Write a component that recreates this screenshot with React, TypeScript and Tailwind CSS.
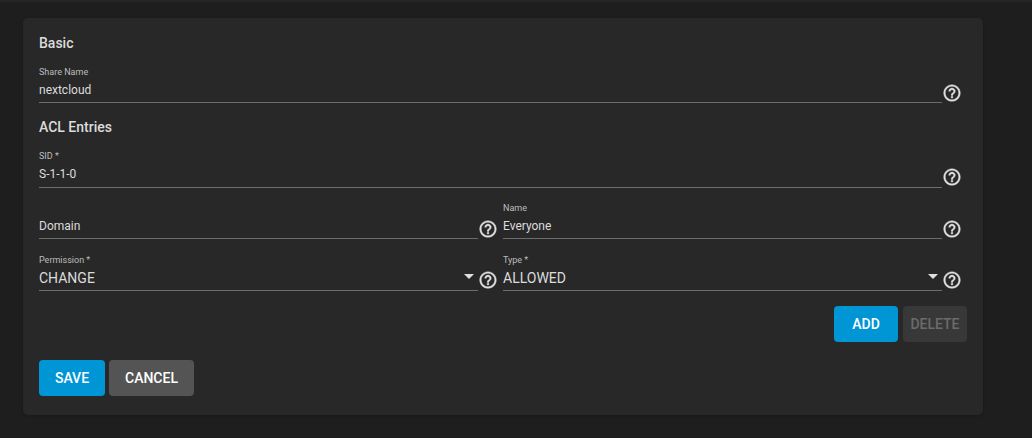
function Help({ raised }: { raised?: boolean }) {
  return (
    <svg width="20" height="20" viewBox="0 0 24 24" className={raised ? "mb-[1px] shrink-0" : "shrink-0"} fill="#e0e0e0" stroke="#e0e0e0" strokeWidth="0.4">
      <path d="M11 18h2v-2h-2v2zm1-16C6.48 2 2 6.48 2 12s4.48 10 10 10 10-4.48 10-10S17.52 2 12 2zm0 18c-4.41 0-8-3.59-8-8s3.59-8 8-8 8 3.59 8 8-3.59 8-8 8zm0-14c-2.21 0-4 1.79-4 4h2c0-1.1.9-2 2-2s2 .9 2 2c0 2-3 1.75-3 5h2c0-2.25 3-2.5 3-5 0-2.21-1.79-4-4-4z" />
    </svg>
  );
}

function Field({ label, value, select, big, raised, tall }: { label?: string; value: string; select?: boolean; big?: boolean; raised?: boolean; tall?: boolean }) {
  return (
    <div className="flex min-w-0 flex-1 items-end">
      <div className={`relative min-w-0 flex-1 border-b border-[#6e6e6e] ${tall ? "h-[38px]" : "h-[37px]"}`}>
        {label && <div className="absolute left-0 top-0 text-[9px] leading-[12px] text-[#bdbdbd]">{label}</div>}
        <div className={`absolute left-0 top-[14px] leading-[20px] text-[#dcdcdc] ${big ? "text-[14px]" : "text-[12px]"}`}>{value}</div>
        {select && (
          <div className="absolute right-[4px] top-[20px] h-0 w-0 border-x-[5px] border-t-[5px] border-x-transparent border-t-[#e0e0e0]" />
        )}
      </div>
      <div className="w-[25px]">
        <Help raised={raised} />
      </div>
    </div>
  );
}

export default function App() {
  return (
    <div className="h-[438px] w-[1032px] overflow-hidden bg-[#1e1e1e] font-['Roboto',sans-serif]">
      <div className="h-[2px] bg-[#262626]" />
      <div className="ml-[23px] mt-[16px] h-[397px] w-[960px] rounded-[5px] bg-[#282828] px-4 pt-[16px] shadow-sm">
        <h2 className="text-[14px] font-medium leading-[18px] text-[#dcdcdc]">Basic</h2>
        <div className="mt-[14px]">
          <Field label="Share Name" value="nextcloud" />
        </div>
        <h2 className="mt-[15px] text-[14px] font-medium leading-[18px] text-[#dcdcdc]">ACL Entries</h2>
        <div className="mt-[14px]">
          <Field label="SID *" value="S-1-1-0" raised tall />
        </div>
        <div className="mt-[14px] flex">
          <Field value="Domain" />
          <Field label="Name" value="Everyone" />
        </div>
        <div className="mt-[15px] flex">
          <Field label="Permission *" value="CHANGE" select big raised />
          <Field label="Type *" value="ALLOWED" select big raised />
        </div>
        <div className="mt-[15px] flex justify-end gap-[5px]">
          <button className="h-[36px] w-[64px] rounded-[4px] bg-[#0095d5] text-[14px] font-medium text-white">ADD</button>
          <button className="h-[36px] w-[64px] rounded-[4px] bg-[#383838] text-[14px] font-medium text-[#6b6b6b]">DELETE</button>
        </div>
        <div className="mt-[18px] flex gap-[4px]">
          <button className="h-[36px] w-[66px] rounded-[4px] bg-[#0095d5] text-[14px] font-medium text-white">SAVE</button>
          <button className="h-[36px] w-[85px] rounded-[4px] bg-[#545454] text-[14px] font-medium text-white">CANCEL</button>
        </div>
      </div>
    </div>
  );
}
